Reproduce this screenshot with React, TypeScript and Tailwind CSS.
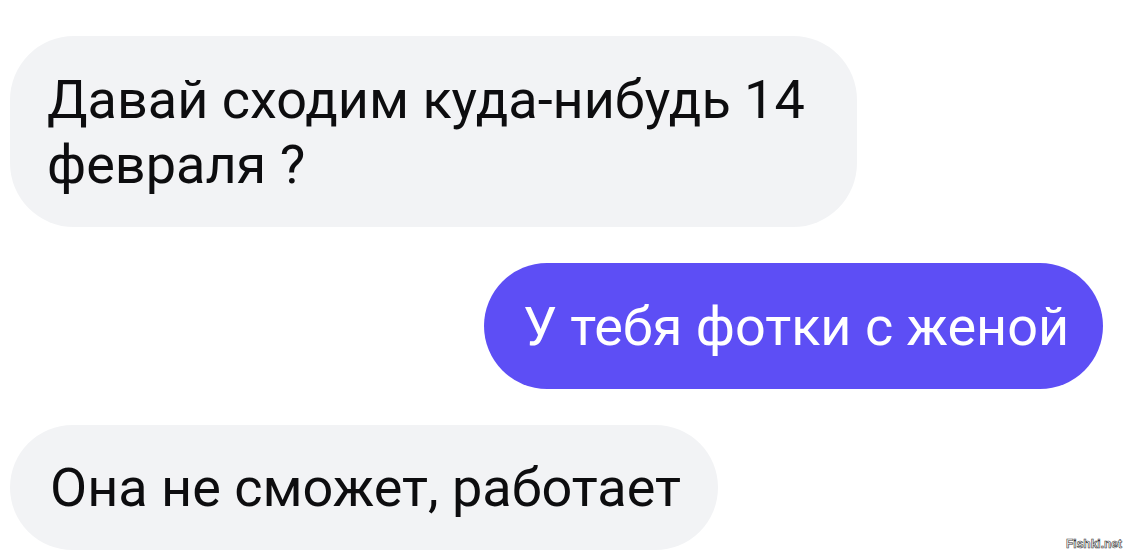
const Bubble = ({
  children,
  mine,
  className,
}: {
  children: React.ReactNode
  mine?: boolean
  className?: string
}) => (
  <div
    className={
      (mine ? 'self-end bg-[#5d4ef5] text-white' : 'self-start bg-[#f2f3f5] text-[#0d0d0f]') +
      ' rounded-[64px] ' +
      (className || '')
    }
  >
    {children}
  </div>
)

export default function App() {
  return (
    <div
      className="relative flex h-[559px] w-[1127px] flex-col bg-white pt-[36px]"
      style={{ fontFamily: 'Roboto, "Noto Sans", sans-serif' }}
    >
      <Bubble className="ml-[10px] w-[847px] pb-[30px] pl-[37px] pr-[30px] pt-[31px] text-[54px] leading-[65px]">
        Давай сходим куда-нибудь 14 февраля ?
      </Bubble>

      <Bubble
        mine
        className="mr-[24px] mt-[36px] flex h-[126px] w-[619px] items-center pl-[39px] text-[54px]"
      >
        У тебя фотки с женой
      </Bubble>

      <Bubble className="ml-[10px] mt-[36px] flex h-[125px] w-[708px] items-center pl-[40px] text-[54px]">
        Она не сможет, работает
      </Bubble>

      <span
        className="absolute bottom-[6px] right-[5px] text-[12px] font-bold text-white"
        style={{ WebkitTextStroke: '0.6px #333', fontFamily: '"Liberation Sans", sans-serif' }}
      >
        Fishki.net
      </span>
    </div>
  )
}
